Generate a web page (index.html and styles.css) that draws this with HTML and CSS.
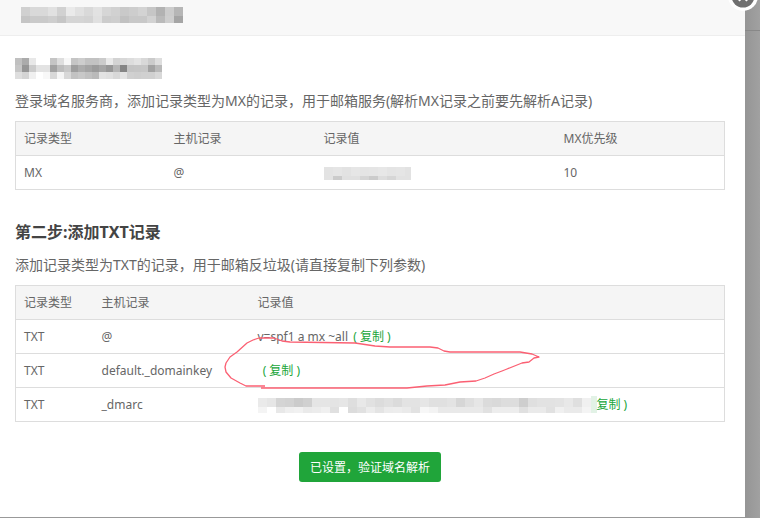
FILE: index.html
```html
<!DOCTYPE html>
<html lang="zh-CN">
<head>
<meta charset="utf-8">
<title>域名解析设置</title>
<link rel="stylesheet" href="styles.css">
</head>
<body>
<main class="dialog">
  <header class="dialog-head">
    <svg class="mosaic" width="162" height="16" aria-hidden="true" data-cell="9" data-rows="9,7"
      data-tones="d0d9d9e1d1eae1d9e2d6d1c9cdd3c6b2ccb6 c5cacacec6d5d5d3e0cccec1c8c8d2bacea5"></svg>
    <button class="close" type="button" aria-label="关闭">
      <svg width="30" height="30" viewBox="0 0 30 30" aria-hidden="true">
        <circle cx="15" cy="15" r="15" fill="#fff"/>
        <circle cx="15" cy="15" r="11.5" fill="#707070"/>
        <path d="M10 10L19.500 19.500M20 10L10.500 19.500" stroke="#fff" stroke-width="3"/>
      </svg>
    </button>
  </header>
  <div class="dialog-body">
    <section class="step">
      <h2 class="step-title">
        <svg class="mosaic" width="147" height="21" aria-hidden="true" data-cell="7" data-rows="7,7,7"
          data-tones="c0abe8ffffc5def7c5cdc2c2cbe9d3d8dde3d8cbde c696cce3e3a2bdc89eaca49ba597b585c4c5c6a2b9 ded4f0fff8d8f5d8c2c8c1bae3e0d8e3d0ced0d0d8"></svg>
      </h2>
      <p class="step-text">登录域名服务商，添加记录类型为MX的记录，用于邮箱服务(解析MX记录之前要先解析A记录)</p>
      <table class="records mx">
        <thead>
          <tr><th scope="col">记录类型</th><th scope="col">主机记录</th><th scope="col">记录值</th><th scope="col">MX优先级</th></tr>
        </thead>
        <tbody>
          <tr>
            <td>MX</td><td>@</td>
            <td><svg class="mosaic" width="87" height="13" aria-hidden="true" data-cell="9" data-rows="9,4"
              data-tones="e3e5e2e6e4e5e7e4e5e2 e3cbe0e0d5cbddd6e2e2"></svg></td>
            <td>10</td>
          </tr>
        </tbody>
      </table>
    </section>
    <section class="step">
      <h2 class="step-title">第二步:添加TXT记录</h2>
      <p class="step-text">添加记录类型为TXT的记录，用于邮箱反垃圾(请直接复制下列参数)</p>
      <div class="marked">
        <table class="records txt">
          <thead>
            <tr><th scope="col">记录类型</th><th scope="col">主机记录</th><th scope="col">记录值</th></tr>
          </thead>
          <tbody>
            <tr><td>TXT</td><td>@</td><td>v=spf1 a mx ~all <a class="copy" href="#">( 复制 )</a></td></tr>
            <tr><td>TXT</td><td>default._domainkey</td><td>&nbsp;<a class="copy" href="#">( 复制 )</a></td></tr>
            <tr><td>TXT</td><td>_dmarc</td>
              <td class="masked"><svg class="mosaic" width="333" height="15" aria-hidden="true" data-cell="9" data-rows="9,6"
                data-tones="eae6d4d2cbd0e5e5e4e6dee8e1dce0dbe3e3e6e0e0e3d6dfe6dbd9ddddcedfe2e2e3e8dff0 f4ffe8eff1eaecf0e0ffdce1ece4ecedeae2f7f3e9e9e9e9e9e1ededede0eaeae1f0eaeaf4"></svg><a class="copy" href="#">复制 )</a></td></tr>
          </tbody>
        </table>
        <svg class="ink" width="330" height="60" viewBox="220 335 330 60" aria-hidden="true">
          <path d="M265 386H246L240 383L231 378L226 372L225 367L226 363L230 357L237 352L247 343L253 340L259 338H274L282 341L290 342L355 343L375 346L390 347H430L438 348L444 351L450 352H520L532 354L539 357L534 358L529 362L522 363L507 369L502 371L494 374L485 378L476 381L460 382L445 385L427 386L407 388H261"/>
        </svg>
      </div>
    </section>
    <div class="actions"><button class="verify" type="button">已设置，验证域名解析</button></div>
  </div>
</main>
<script src="mosaic.js"></script>
</body>
</html>
```
FILE: mosaic.js
```js
// Fills each masked value with a grid of grey cells: two hex digits per cell, one group per row.
document.querySelectorAll('.mosaic').forEach(function (svg) {
  var cell = Number(svg.dataset.cell);
  var heights = svg.dataset.rows.split(',').map(Number);
  var y = 0;
  svg.dataset.tones.trim().split(/\s+/).forEach(function (row, r) {
    row.match(/../g).forEach(function (tone, c) {
      var rect = document.createElementNS('http://www.w3.org/2000/svg', 'rect');
      rect.setAttribute('x', c * cell);
      rect.setAttribute('y', y);
      rect.setAttribute('width', cell);
      rect.setAttribute('height', heights[r]);
      rect.setAttribute('fill', '#' + tone + tone + tone);
      svg.appendChild(rect);
    });
    y += heights[r];
  });
});
```
FILE: styles.css
```css
* {
  box-sizing: border-box;
}

body {
  margin: 0;
  min-height: 100vh;
  overflow-x: hidden;
  background: linear-gradient(#888, #888) 0 30px / 100% 1px no-repeat, linear-gradient(90deg, #959595, #a1a1a1) right / 15px 100% no-repeat, #999;
  color: #666;
  font: 12px/17px "Noto Sans", "Noto Sans CJK SC", sans-serif;
}

.dialog {
  position: relative;
  margin-right: 15px;
  padding-bottom: 35px;
  background: #fff;
}

.dialog-head {
  height: 36px;
  padding: 7px 21px;
  border-bottom: 1px solid #eee;
  background: #f8f8f8;
}

.mosaic {
  display: block;
  shape-rendering: crispEdges;
}

.close {
  position: absolute;
  top: -19px;
  right: -13px;
  padding: 0;
  border: 0;
  background: none;
}

.close svg {
  display: block;
}

.dialog-body {
  padding: 20px 20px 0 15px;
}

.step {
  margin-bottom: 30px;
}

.step-title {
  margin: 0;
  height: 25px;
  padding-top: 2px;
  color: #444;
  font-size: 16px;
  line-height: 21px;
}

.step-text {
  margin: 10px 0;
  font-size: 14px;
  line-height: 20px;
}

.records {
  width: 100%;
  table-layout: fixed;
  border-collapse: collapse;
  border: 1px solid #ddd;
}

.records th,
.records td {
  height: 34px;
  padding: 0 8px;
  border-bottom: 1px solid #ddd;
  font-weight: 400;
  text-align: left;
  white-space: nowrap;
}

.records th {
  background: #f5f5f5;
}

.mx th:nth-child(1),
.mx th:nth-child(2) {
  width: 150px;
}

.mx th:nth-child(3) {
  width: 240px;
}

.txt th:nth-child(1) {
  width: 78px;
}

.txt th:nth-child(2) {
  width: 156px;
}

td .mosaic {
  display: inline-block;
  vertical-align: middle;
}

.copy {
  margin-left: 2px;
  color: #20a53a;
  text-decoration: none;
}

.masked .copy {
  margin-left: 0;
  border-left: 6px solid #e2f2e6;
}

.marked {
  position: relative;
}

.ink {
  position: absolute;
  top: 50px;
  left: 205px;
  fill: none;
  stroke: #fb6073;
  stroke-width: 1.3;
  stroke-linejoin: round;
  pointer-events: none;
}

.actions {
  text-align: center;
}

.verify {
  height: 30px;
  padding: 0 11px;
  border: 0;
  border-radius: 3px;
  background: #20a53a;
  color: #fff;
  font: inherit;
}
```
